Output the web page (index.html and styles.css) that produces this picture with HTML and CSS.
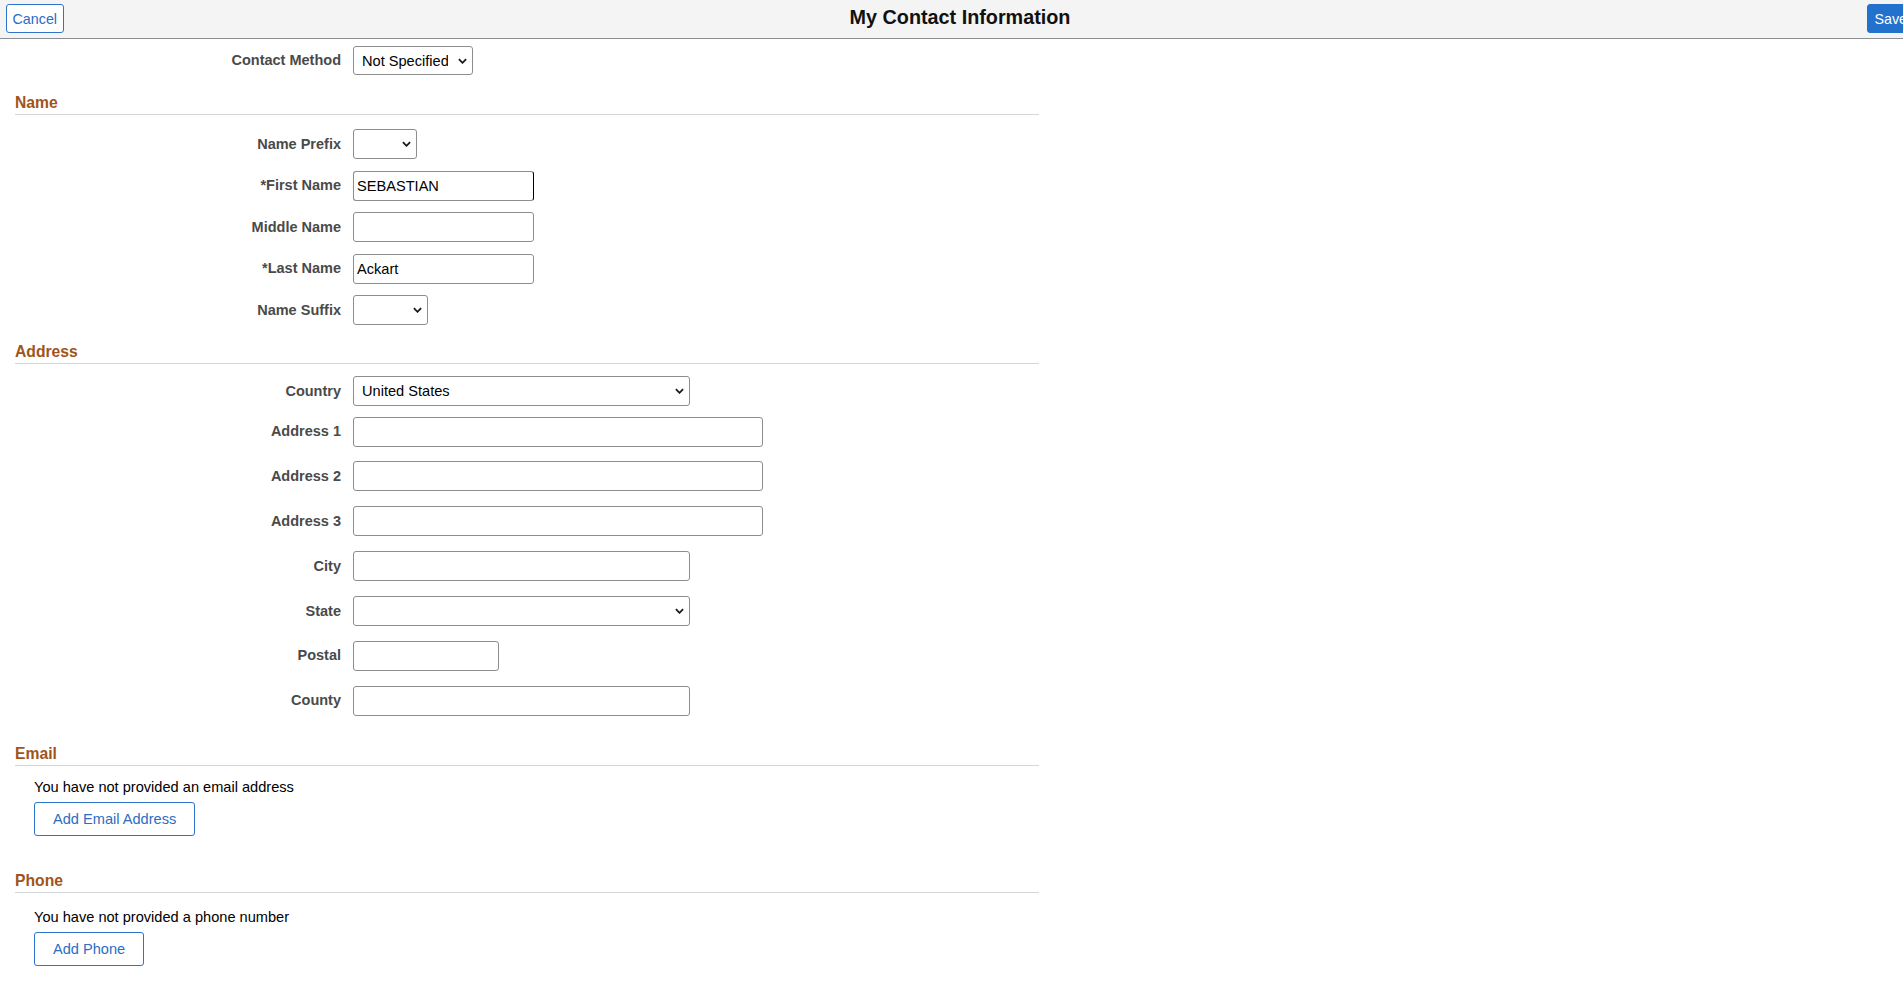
FILE: index.html
```html
<!DOCTYPE html>
<html lang="en">
<head>
    <meta charset="UTF-8">
    <meta name="viewport" content="width=device-width, initial-scale=1.0">
    <title>My Contact Information</title>
    <link rel="stylesheet" href="styles.css">
</head>
<body>

    <!-- Page header -->
    <header class="page-header">
        <button class="btn-cancel">Cancel</button>
        <h1>My Contact Information</h1>
        <button class="btn-save">Save</button>
    </header>

    <main class="form">
        <div class="field-row row-method">
            <label>Contact Method</label>
            <span class="select-wrap w-method">
                <select><option>Not Specified</option></select>
                <svg class="chev" viewBox="0 0 10 6"><path d="M1 1 L5 5 L9 1"/></svg>
            </span>
        </div>

        <!-- Name -->
        <section class="group">
            <h2>Name</h2>
            <div class="rows rows-name">
                <div class="field-row">
                    <label>Name Prefix</label>
                    <span class="select-wrap w-prefix">
                        <select><option></option></select>
                        <svg class="chev" viewBox="0 0 10 6"><path d="M1 1 L5 5 L9 1"/></svg>
                    </span>
                </div>
                <div class="field-row">
                    <label>*First Name</label>
                    <input class="w-name edge" type="text" value="SEBASTIAN">
                </div>
                <div class="field-row">
                    <label>Middle Name</label>
                    <input class="w-name" type="text">
                </div>
                <div class="field-row">
                    <label>*Last Name</label>
                    <input class="w-name" type="text" value="Ackart">
                </div>
                <div class="field-row">
                    <label>Name Suffix</label>
                    <span class="select-wrap w-suffix">
                        <select><option></option></select>
                        <svg class="chev" viewBox="0 0 10 6"><path d="M1 1 L5 5 L9 1"/></svg>
                    </span>
                </div>
            </div>
        </section>

        <!-- Address -->
        <section class="group group-address">
            <h2>Address</h2>
            <div class="rows rows-address">
                <div class="field-row row-country">
                    <label>Country</label>
                    <span class="select-wrap w-wide">
                        <select><option>United States</option></select>
                        <svg class="chev" viewBox="0 0 10 6"><path d="M1 1 L5 5 L9 1"/></svg>
                    </span>
                </div>
                <div class="field-row">
                    <label>Address 1</label>
                    <input class="w-addr" type="text">
                </div>
                <div class="field-row">
                    <label>Address 2</label>
                    <input class="w-addr" type="text">
                </div>
                <div class="field-row">
                    <label>Address 3</label>
                    <input class="w-addr" type="text">
                </div>
                <div class="field-row">
                    <label>City</label>
                    <input class="w-wide" type="text">
                </div>
                <div class="field-row">
                    <label>State</label>
                    <span class="select-wrap w-wide">
                        <select><option></option></select>
                        <svg class="chev" viewBox="0 0 10 6"><path d="M1 1 L5 5 L9 1"/></svg>
                    </span>
                </div>
                <div class="field-row">
                    <label>Postal</label>
                    <input class="w-postal" type="text">
                </div>
                <div class="field-row">
                    <label>County</label>
                    <input class="w-wide" type="text">
                </div>
            </div>
        </section>

        <!-- Email -->
        <section class="group group-email">
            <h2>Email</h2>
            <div class="empty-block">
                <p>You have not provided an email address</p>
                <button class="btn-add">Add Email Address</button>
            </div>
        </section>

        <!-- Phone -->
        <section class="group group-phone">
            <h2>Phone</h2>
            <div class="empty-block">
                <p>You have not provided a phone number</p>
                <button class="btn-add">Add Phone</button>
            </div>
        </section>
    </main>

</body>
</html>
```

FILE: styles.css
```css
/* Reset */
* {
    box-sizing: border-box;
}

html {
    overflow: hidden;
}

body {
    margin: 0;
    width: 1920px;
    font-family: "Liberation Sans", Arial, sans-serif;
    font-size: 14.6px;
    color: #000;
    background-color: #fff;
}

button,
input,
select {
    font-family: "Liberation Sans", Arial, sans-serif;
}

/* Header */
.page-header {
    display: grid;
    grid-template-columns: 1fr auto 1fr;
    align-items: start;
    height: 39px;
    padding: 0 6px;
    background-color: #f4f4f4;
    border-bottom: 1px solid #8b8e92;
}

.page-header h1 {
    margin: 6px 0 0;
    font-size: 19.8px;
    line-height: 22px;
    font-weight: bold;
    color: #111;
}

.btn-cancel,
.btn-save {
    margin-top: 4px;
    height: 29px;
    font-size: 14.3px;
    border-radius: 3px;
    cursor: pointer;
}

.btn-cancel {
    justify-self: start;
    padding: 0 5.5px;
    color: #2a6dc4;
    background-color: #fff;
    border: 1px solid #2f74cb;
}

.btn-save {
    justify-self: end;
    padding: 0 6px;
    color: #fff;
    background-color: #2171cd;
    border: 1px solid #2171cd;
}

/* Form */
.form {
    width: 1024px;
    margin-left: 15px;
}

.field-row {
    display: flex;
    align-items: center;
    gap: 12px;
}

.field-row label {
    width: 326px;
    text-align: right;
    font-size: 14.5px;
    line-height: 17px;
    font-weight: bold;
    color: #4a4a4a;
}

.row-method {
    margin-top: 7px;
}

.row-method .select-wrap {
    height: 29px;
}

/* Section headings */
.group h2 {
    margin: 19px 0 0;
    padding-bottom: 2px;
    font-size: 15.7px;
    line-height: 18px;
    font-weight: bold;
    color: #a0541b;
    border-bottom: 1px solid #d3d6db;
}

.group-address h2 {
    margin-top: 18px;
}

.group-email h2 {
    margin-top: 29px;
}

.group-phone h2 {
    margin-top: 36px;
}

.rows-name {
    display: flex;
    flex-direction: column;
    gap: 11.5px;
    margin-top: 14px;
}

.rows-address {
    margin-top: 12px;
}

.rows-address .field-row + .field-row {
    margin-top: 14.9px;
}

.rows-address .row-country + .field-row {
    margin-top: 10.5px;
}

/* Inputs */
input[type="text"] {
    height: 30px;
    padding: 0 3px;
    font-size: 14.6px;
    color: #000;
    background-color: #fff;
    border: 1px solid #8d8d8d;
    border-radius: 3px;
    outline: none;
}

input.edge {
    border-right-color: #000;
}

.select-wrap {
    position: relative;
    display: inline-block;
    height: 30px;
}

.select-wrap select {
    appearance: none;
    -webkit-appearance: none;
    width: 100%;
    height: 100%;
    padding: 0 24px 0 8px;
    font-size: 14.6px;
    color: #000;
    background-color: #fff;
    border: 1px solid #8d8d8d;
    border-radius: 3px;
    outline: none;
}

.chev {
    position: absolute;
    right: 6px;
    top: 50%;
    width: 9px;
    height: 6px;
    margin-top: -3px;
    fill: none;
    stroke: #1a1a1a;
    stroke-width: 2;
    pointer-events: none;
}

/* Field widths */
.w-method { width: 120px; }
.w-prefix { width: 64px; }
.w-suffix { width: 75px; }
.w-name { width: 181px; }
.w-wide { width: 337px; }
.w-addr { width: 410px; }
.w-postal { width: 146px; }

/* Email / Phone blocks */
.empty-block {
    padding-left: 19px;
}

.empty-block p {
    margin: 0;
    line-height: 17px;
}

.group-email .empty-block p {
    margin-top: 13px;
}

.group-phone .empty-block p {
    margin-top: 16.5px;
}

.btn-add {
    margin-top: 6px;
    height: 34px;
    padding: 0 18px;
    font-size: 14.6px;
    color: #2c6ec3;
    background-color: #fff;
    border: 1px solid #2f74cb;
    border-radius: 3px;
    cursor: pointer;
}
```
